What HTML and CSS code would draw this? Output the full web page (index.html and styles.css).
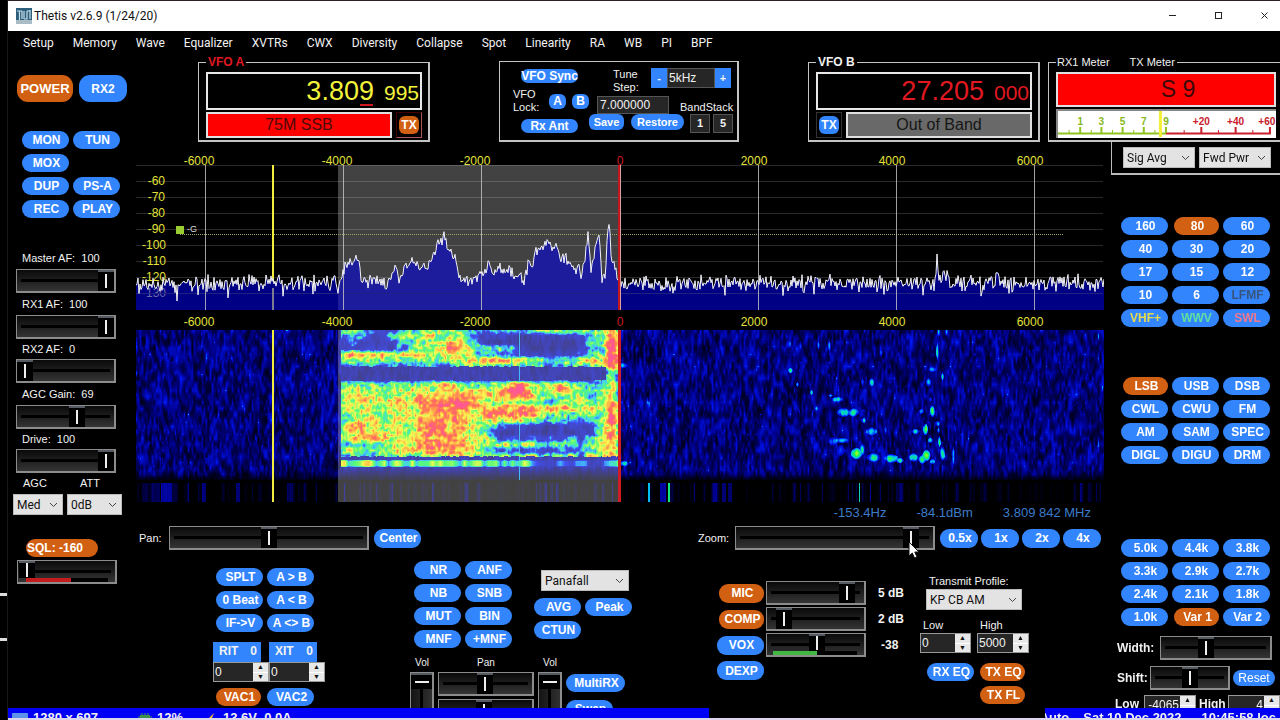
FILE: index.html
```html
<!DOCTYPE html>
<html lang="en">
<head>
<meta charset="utf-8">
<title>Thetis v2.6.9 (1/24/20)</title>
<link rel="stylesheet" href="styles.css">
</head>
<body>
<div class="desktop">
  <div class="gutter"></div>
  <div class="app">
    <header class="titlebar">
      <svg class="app-icon" width="16" height="16" viewBox="0 0 16 16"><rect width="16" height="16" fill="#2d5f7c"/><rect y="12" width="16" height="4" fill="#a9bcc6"/><path d="M1 3H6M3.500 3V12M6 3V11M8 3V11M8 11H11V3M14 2V11M11 3H14" fill="none" stroke="#c6dfea" stroke-width="1.200"/></svg>
      <h1>Thetis v2.6.9 (1/24/20)</h1>
      <div class="win-buttons">
        <button aria-label="Minimize"><svg width="10" height="10" viewBox="0 0 10 10"><path d="M1 4.500H8" stroke="#222"/></svg></button>
        <button aria-label="Maximize"><svg width="10" height="10" viewBox="0 0 10 10"><rect x="1.500" y="1.500" width="6" height="6" fill="none" stroke="#222"/></svg></button>
        <button aria-label="Close"><svg width="10" height="10" viewBox="0 0 10 10"><path d="M1.500 1.500L7.500 7.500M7.500 1.500L1.500 7.500" stroke="#222"/></svg></button>
      </div>
    </header>
    <nav class="menu">
      <button>Setup</button><button>Memory</button><button>Wave</button><button>Equalizer</button><button>XVTRs</button><button>CWX</button><button>Diversity</button><button>Collapse</button><button>Spot</button><button>Linearity</button><button>RA</button><button>WB</button><button>PI</button><button>BPF</button>
    </nav>

    <div class="top">
      <div class="power-row"><button class="pill big on">POWER</button><button class="pill big rx2">RX2</button></div>
      <div class="vfos">
        <fieldset class="group vfo">
          <legend class="red-text">VFO A</legend>
          <div class="freq yellow-text"><span>3.80<u>9</u></span><small>995</small></div>
          <div class="band-row"><div class="band-name red">75M SSB</div><button class="tx tx-on"><span>TX</span></button></div>
        </fieldset>
        <div class="group sync">
          <div class="sync-left">
            <button class="pill mini wide">VFO Sync</button>
            <div class="lock"><span>VFO<br>Lock:</span><button class="pill tiny">A</button><button class="pill tiny">B</button></div>
            <button class="pill mini wide">Rx Ant</button>
          </div>
          <div class="sync-right">
            <div class="tune"><label for="step">Tune<br>Step:</label><div class="stepper"><button>-</button><input id="step" value="5kHz"><button>+</button></div></div>
            <div class="stack"><input aria-label="Saved frequency" value="7.000000"><span>BandStack</span></div>
            <div class="stack-buttons"><button class="pill save">Save</button><button class="pill restore">Restore</button><button class="square">1</button><button class="square">5</button></div>
          </div>
        </div>
        <fieldset class="group vfo">
          <legend>VFO B</legend>
          <div class="freq red-text"><span>27.205</span><small>000</small></div>
          <div class="band-row"><button class="tx"><span>TX</span></button><div class="band-name gray">Out of Band</div></div>
        </fieldset>
      </div>
      <fieldset class="group meters">
        <legend class="plain"><span>RX1 Meter</span><span>TX Meter</span></legend>
        <div class="s-value">S 9</div>
        <div class="s-scale">
          <svg viewBox="0 0 216 26" preserveAspectRatio="none">
            <path d="M0 22.500H107" stroke="#8fc31f" stroke-width="2"/><path d="M107 22.500H211" stroke="#c8202c" stroke-width="2"/>
            <path d="M22 16V22M43 16V22M64 16V22M85 16V22M107 16V22" stroke="#8fc31f" stroke-width="2"/>
            <path d="M11 19V22M33 19V22M54 19V22M75 19V22M96 19V22" stroke="#8fc31f"/>
            <path d="M142 16V22M176 16V22M210 16V22" stroke="#c8202c" stroke-width="2"/><path d="M125 19V22M159 19V22M193 19V22" stroke="#c8202c"/>
            <path d="M101.500 0V26" stroke="#f3f03a" stroke-width="3"/>
            <g class="scale-text" fill="#86b822"><text x="22" y="14">1</text><text x="43" y="14">3</text><text x="64" y="14">5</text><text x="85" y="14">7</text><text x="107" y="14">9</text></g>
            <g class="scale-text" fill="#c8202c"><text x="142" y="14">+20</text><text x="176" y="14">+40</text><text x="207" y="14">+60</text></g>
          </svg>
        </div>
      </fieldset>
    </div>

    <main class="main">
      <aside class="left">
        <div class="pills two">
          <button class="pill">MON</button><button class="pill">TUN</button>
          <button class="pill">MOX</button><span></span>
          <button class="pill">DUP</button><button class="pill">PS-A</button>
          <button class="pill">REC</button><button class="pill">PLAY</button>
        </div>
        <div class="gains">
          <label for="maf">Master AF:&nbsp; 100</label><input type="range" id="maf" value="100">
          <label for="r1af">RX1 AF:&nbsp; 100</label><input type="range" id="r1af" value="100">
          <label for="r2af" class="tight">RX2 AF:&nbsp; 0</label><input type="range" id="r2af" value="0">
          <label for="agcg">AGC Gain:&nbsp; 69</label><input type="range" id="agcg" value="64">
          <label for="drive" class="tight">Drive:&nbsp; 100</label><input type="range" id="drive" value="100">
        </div>
        <div class="agc-row">
          <div><label for="agc">AGC</label><select id="agc"><option>Med</option></select></div>
          <div class="att"><label for="att">ATT</label><select id="att"><option>0dB</option></select></div>
        </div>
        <div class="squelch"><button class="pill on sql">SQL: -160</button><input type="range" class="level-red" aria-label="Squelch" value="1"></div>
      </aside>

      <section class="center">
        <svg class="pan" viewBox="136 153 968 177">
          <defs><clipPath id="band"><rect x="338" y="165" width="281" height="145"/></clipPath></defs>
          <rect x="338" y="165" width="281" height="145" fill="#424242"/>
          <path class="hgrid" d="M136 165.500H1103M136 181.500H1103M136 197.500H1103M136 213.500H1103M136 229.500H1103M136 245.500H1103M136 261.500H1103M136 277.500H1103"/>
          <g class="axis end"><text x="165" y="185">-60</text><text x="165" y="201">-70</text><text x="165" y="217">-80</text><text x="165" y="233">-90</text><text x="166" y="249">-100</text><text x="166" y="265">-110</text></g>
          <path d="M180 234.500H1064" stroke="#94a860" stroke-dasharray="1 1"/>
          <rect x="176" y="226" width="8" height="8" fill="#9acd32"/><text x="187" y="232" class="gain-mark">-G</text>
          <path d="M273 165V310" stroke="#f2ec3e" stroke-width="2"/>
          <path id="fill" fill="#000084"/><path id="fill-band" fill="#1c1c9c" clip-path="url(#band)"/>
          <text x="166" y="281" class="axis end">-120</text>
          <text x="166" y="297" class="axis-dim">-130</text>
          <path d="M136 293.500H1103" stroke="#202080" />
          <path d="M205.500 165V310M343.500 165V310M481.500 165V310M758.500 165V310M896.500 165V310M1034.500 165V310" stroke="#c8c8c8" stroke-opacity=".8"/>
          <path d="M273 288V310" stroke="#7c7c90" stroke-width="2"/>
          <path id="trace" fill="none" stroke="#f4f4f8"/>
          <path d="M619 165V310" stroke="#c4161c" stroke-width="2"/><path d="M620.500 165V310" stroke="#d8a0a0"/>
          <g class="axis"><text x="199" y="165">-6000</text><text x="337" y="165">-4000</text><text x="475" y="165">-2000</text><text x="620" y="165" class="zero">0</text><text x="754" y="165">2000</text><text x="892" y="165">4000</text><text x="1030" y="165">6000</text>
          <text x="199" y="326">-6000</text><text x="337" y="326">-4000</text><text x="475" y="326">-2000</text><text x="620" y="326" class="zero">0</text><text x="754" y="326">2000</text><text x="892" y="326">4000</text><text x="1030" y="326">6000</text></g>
        </svg>
        <canvas id="fall" width="968" height="172"></canvas>
        <div class="readout"><span>-153.4Hz</span><span>-84.1dBm</span><span>3.809 842 MHz</span></div>
        <div class="panzoom">
          <label for="pan">Pan:</label><input type="range" id="pan" class="long" value="50"><button class="pill">Center</button>
          <label for="zoom" class="push">Zoom:</label>
          <div class="zoomer"><input type="range" id="zoom" class="long" value="92"><svg class="cursor" width="12" height="19" viewBox="0 0 12 19"><path d="M1 1V15L4.300 12L6.500 17L9 16L6.800 11H11Z" fill="#fff" stroke="#111"/></svg></div>
          <div class="zoom-pills"><button class="pill">0.5x</button><button class="pill">1x</button><button class="pill">2x</button><button class="pill">4x</button></div>
        </div>
        <div class="controls">
          <div class="block-a">
            <div class="pills two">
              <button class="pill">SPLT</button><button class="pill">A &gt; B</button>
              <button class="pill">0 Beat</button><button class="pill">A &lt; B</button>
              <button class="pill">IF-&gt;V</button><button class="pill">A &lt;&gt; B</button>
            </div>
            <div class="offsets">
              <div><button class="offset"><span>RIT</span><span>0</span></button><div class="spin"><input aria-label="RIT" value="0"><span><button aria-label="RIT up">▲</button><button aria-label="RIT down">▼</button></span></div></div>
              <div><button class="offset"><span>XIT</span><span>0</span></button><div class="spin"><input aria-label="XIT" value="0"><span><button aria-label="XIT up">▲</button><button aria-label="XIT down">▼</button></span></div></div>
            </div>
            <div class="pills two"><button class="pill on start">VAC1</button><button class="pill">VAC2</button></div>
          </div>
          <div class="block-b">
            <div class="dsp">
              <div class="pills two">
                <button class="pill">NR</button><button class="pill">ANF</button>
                <button class="pill">NB</button><button class="pill">SNB</button>
                <button class="pill">MUT</button><button class="pill">BIN</button>
                <button class="pill">MNF</button><button class="pill">+MNF</button>
              </div>
              <div class="view">
                <select aria-label="Display mode"><option>Panafall</option></select>
                <div class="pills two"><button class="pill">AVG</button><button class="pill">Peak</button><button class="pill">CTUN</button></div>
              </div>
            </div>
            <div class="multi">
              <div class="vol"><label for="v1">Vol</label><input type="range" class="vert" id="v1" value="100"></div>
              <div class="vol pans"><label for="p1">Pan</label><input type="range" id="p1" value="49"><input type="range" aria-label="Sub pan" value="48"></div>
              <div class="vol"><label for="v2">Vol</label><input type="range" class="vert" id="v2" value="100"></div>
              <div class="multi-pills"><button class="pill wide">MultiRX</button><button class="pill">Swap</button></div>
            </div>
          </div>
          <div class="block-c">
            <div class="mic">
              <button class="pill on">MIC</button><input type="range" aria-label="Mic gain" value="89"><output>5 dB</output>
              <button class="pill on">COMP</button><input type="range" aria-label="Compression" value="11"><output>2 dB</output>
              <button class="pill">VOX</button><input type="range" class="level-green" aria-label="VOX level" value="52"><output class="num">-38</output>
              <button class="pill">DEXP</button>
            </div>
            <div class="profile">
              <label for="prof">Transmit Profile:</label><select id="prof"><option>KP CB AM</option></select>
              <div class="limits">
                <div><label for="lo">Low</label><div class="spin"><input id="lo" value="0"><span><button aria-label="Low up">▲</button><button aria-label="Low down">▼</button></span></div></div>
                <div><label for="hi">High</label><div class="spin"><input id="hi" value="5000"><span><button aria-label="High up">▲</button><button aria-label="High down">▼</button></span></div></div>
              </div>
              <div class="pills two eq"><button class="pill">RX EQ</button><button class="pill on">TX EQ</button><span></span><button class="pill on">TX FL</button></div>
            </div>
          </div>
        </div>
      </section>

      <aside class="right">
        <div class="meter-modes"><select aria-label="RX meter"><option>Sig Avg</option></select><select aria-label="TX meter"><option>Fwd Pwr</option></select></div>
        <div class="pills three bands">
          <button class="pill">160</button><button class="pill on">80</button><button class="pill">60</button>
          <button class="pill">40</button><button class="pill">30</button><button class="pill">20</button>
          <button class="pill">17</button><button class="pill">15</button><button class="pill">12</button>
          <button class="pill">10</button><button class="pill">6</button><button class="pill lfmf">LFMF</button>
          <button class="pill vhf">VHF+</button><button class="pill wwv">WWV</button><button class="pill swl">SWL</button>
        </div>
        <div class="pills three modes">
          <button class="pill on">LSB</button><button class="pill">USB</button><button class="pill">DSB</button>
          <button class="pill">CWL</button><button class="pill">CWU</button><button class="pill">FM</button>
          <button class="pill">AM</button><button class="pill">SAM</button><button class="pill">SPEC</button>
          <button class="pill">DIGL</button><button class="pill">DIGU</button><button class="pill">DRM</button>
        </div>
        <div class="pills three filters">
          <button class="pill">5.0k</button><button class="pill">4.4k</button><button class="pill">3.8k</button>
          <button class="pill">3.3k</button><button class="pill">2.9k</button><button class="pill">2.7k</button>
          <button class="pill">2.4k</button><button class="pill">2.1k</button><button class="pill">1.8k</button>
          <button class="pill">1.0k</button><button class="pill on">Var 1</button><button class="pill">Var 2</button>
        </div>
        <div class="side-row"><label for="wid">Width:</label><input type="range" id="wid" value="40"></div>
        <div class="side-row"><label for="shf">Shift:</label><input type="range" id="shf" value="50"><button class="pill reset">Reset</button></div>
        <div class="edges"><label for="flo">Low</label><div class="spin"><input id="flo" value="-4065"><span><button aria-label="Filter low up">▲</button><button aria-label="Filter low down">▼</button></span></div><label for="fhi">High</label><div class="spin"><input id="fhi" value="4"><span><button aria-label="Filter high up">▲</button><button aria-label="Filter high down">▼</button></span></div></div>
      </aside>
    </main>

    <footer class="status">
      <div class="status-left">
        <svg width="16" height="14" viewBox="0 0 16 14"><rect width="16" height="11" rx="1" fill="#5f93ea"/></svg><span class="res">1280 x 697</span>
        <svg width="14" height="14" viewBox="0 0 14 14"><path d="M4 0V14M7 0V14M10 0V14M0 4H14M0 7H14M0 10H14" stroke="#4d9a58"/><rect x="2" y="2" width="10" height="10" fill="#3f8f4b"/><rect x="5" y="5" width="4" height="4" fill="#245c2e"/></svg><span class="cpu">12%</span>
        <svg width="12" height="14" viewBox="0 0 12 14"><path d="M8 0L0 8H5L3 14L11 5H6Z" fill="#f2c12e"/></svg><span>13.6V&nbsp; 0.0A</span>
      </div>
      <div class="status-right"><span>Auto</span><span>Sat 10 Dec 2022</span><span class="clock">10:45:58 loc</span></div>
    </footer>
  </div>
</div>
<script src="scope.js"></script>
</body>
</html>
```
FILE: styles.css
```css
* { box-sizing: border-box; }
body { margin: 0; background: #000; color: #f2f2f2; font: 11px/13px "Liberation Sans", Arial, sans-serif; overflow: hidden; }
button, input, select { font: inherit; color: inherit; margin: 0; }
button { border: 0; padding: 0; cursor: pointer; }
.desktop { display: flex; height: 100vh; }
.gutter { flex: none; width: 8px; border-right: 1px solid #181818; background: linear-gradient(#ddd, #ddd) 0 593px / 8px 3px no-repeat, linear-gradient(#ddd, #ddd) 0 638px / 8px 3px no-repeat; }
.app { flex: 1; min-width: 0; display: flex; flex-direction: column; border-top: 1px solid #2a2226; border-bottom: 2px solid #ddd6ee; }

.titlebar { flex: none; height: 30px; background: #fff; color: #111; display: flex; align-items: center; padding: 0 8px; gap: 2px; }
.titlebar h1 { margin: 0; font: 12px/16px Roboto, "Noto Sans", sans-serif; }
.win-buttons { margin-left: auto; display: flex; gap: 35px; padding-right: 2px; }
.win-buttons button { background: none; width: 11px; height: 11px; display: flex; align-items: center; justify-content: center; }
.menu { flex: none; height: 24px; display: flex; align-items: center; gap: 19px; padding-left: 15px; }
.menu button { background: none; font: 12px/16px Roboto, "Noto Sans", sans-serif; }

.pill { width: 47px; height: 18px; flex: none; border-radius: 9px; background: #3385fd; color: #fff; font: bold 12px/18px "Liberation Sans", Arial, sans-serif; padding-left: 2px; white-space: nowrap; }
.pill.on { background: #d26012; width: 45px; justify-self: end; }
.pill.on.start { justify-self: start; }
.pill.big { width: 48px; height: 27px; border-radius: 11px; padding: 0; }
.pill.big.on { width: 56px; font-size: 13px; }
.pills { display: grid; gap: 5px 4px; }
.two { grid-template-columns: 47px 47px; }
.three { grid-template-columns: 47px 47px 47px; }

.top { flex: none; display: flex; align-items: flex-start; height: 76px; }
.power-row { flex: none; width: 190px; display: flex; gap: 6px; padding: 20px 0 0 9px; }
.vfos { flex: 1; display: flex; justify-content: space-between; }
.group { border: 2px solid #c4c4c4; border-width: 1px 2px 2px 1px; margin: 6px 0 0; height: 81px; min-width: 0; }
.vfo { width: 232px; padding: 3px 6px 0 7px; margin-top: 0; height: 87px; }
.group legend { font: bold 12px/14px "Liberation Sans", Arial, sans-serif; padding: 0 2px; margin-left: 0; }
.group .plain { font-weight: normal; font-size: 11px; padding: 0 2px 0 1px; display: flex; gap: 20px; }
.red-text { color: #e01820; }
.yellow-text { color: #f3f33c; }
.freq { height: 38px; width: 216px; border: 2px solid #e8e8e8; display: flex; justify-content: flex-end; align-items: baseline; gap: 10px; font-size: 27px; line-height: 35px; padding-right: 1px; }
.freq small { font-size: 21px; }
.freq u { text-decoration: none; background: linear-gradient(#d01820, #d01820) 50% 100% / 13px 2px no-repeat; }
.band-row { display: flex; gap: 4px; margin-top: 2px; justify-content: space-between; }
.band-name { flex: 1; height: 26px; border: 2px solid #e0e0e0; text-align: center; font-size: 16px; line-height: 21px; }
.band-name.red { background: #f00; color: #4a0a0a; }
.band-name.gray { background: #696969; color: #161616; }
.tx { width: 26px; height: 26px; background: #000; border: 1px solid #333; font: bold 12px/18px "Liberation Sans", Arial, sans-serif; display: flex; align-items: center; justify-content: center; }
.tx span { width: 20px; height: 18px; border-radius: 6px; background: #3385fd; color: #fff; }
.tx-on { border-color: #400 #a55 #a55 #400; }
.tx-on span { background: #d26012; }

.sync { width: 240px; display: flex; padding: 7px 0 0 13px; }
.sync-left { width: 76px; display: flex; flex-direction: column; }
.pill.mini { height: 14px; line-height: 14px; margin-left: 8px; }
.pill.mini.wide { width: 57px; padding: 0; }
.lock { display: flex; gap: 6px; align-items: center; margin: 5px 0 5px; height: 26px; }
.lock span { width: 30px; }
.pill.tiny { width: 17px; height: 15px; border-radius: 6px; line-height: 15px; padding: 0; }
.sync-right { flex: 1; display: flex; flex-direction: column; margin-top: -1px; }
.tune { display: flex; padding-left: 24px; height: 26px; }
.tune label { width: 38px; }
.stepper { display: flex; height: 20px; }
.stepper button { width: 16px; background: #3385fd; font-weight: bold; }
.stepper input { width: 48px; background: #262626; border: 1px solid #555; padding: 0 1px; }
.stepper input, .stack input { font-size: 12px; }
.stack { display: flex; gap: 11px; padding-left: 8px; align-items: flex-end; height: 20px; }
.stack input { width: 72px; height: 18px; background: #262626; border: 1px solid #555; padding: 0 2px; }
.stack-buttons { display: flex; }
.pill.save, .pill.restore { height: 16px; line-height: 16px; font-size: 11px; padding: 0; border-radius: 6px; width: 35px; margin-right: 7px; }
.pill.restore { width: 53px; border-radius: 8px; margin-right: 6px; }
.square { width: 20px; height: 19px; background: #262626; border: 1px solid #555; font-weight: bold; margin: 0 3px 0 0; }

.meters { width: 232px; flex: none; margin: 0 0 0 8px; height: 87px; border-right: 0; padding: 3px 4px 0 7px; }
.s-value { height: 35px; background: #f00; border: 2px solid #e0e0e0; color: #3c0808; font-size: 23px; line-height: 31px; text-align: center; padding-left: 24px; }
.s-scale { margin-top: 2px; height: 29px; background: #fff; border-top: 2px solid #888; border-left: 2px solid #888; }
.s-scale svg { display: block; width: 100%; height: 26px; }
.scale-text { font: bold 10px "Liberation Sans", Arial, sans-serif; text-anchor: middle; }

.main { flex: 1; min-height: 0; overflow: hidden; display: flex; align-items: flex-start; }
.left { flex: none; width: 128px; }
.left > .two { margin-left: 14px; }
.gains { display: flex; flex-direction: column; width: 100px; margin: 29px 0 0 8px; }
.gains label { line-height: 22px; padding-left: 6px; white-space: nowrap; }
.gains label.tight { line-height: 20px; }

input[type="range"] { appearance: none; width: 100px; height: 24px; border: 1px solid #8c8c8c; border-width: 1px 2px 2px 1px; background: linear-gradient(#000, #000) 50% 50% / calc(100% - 8px) 3px no-repeat, linear-gradient(#0a0a0a, #343434); flex: none; }
input[type="range"]::-webkit-slider-thumb { appearance: none; width: 16px; height: 21px; background: linear-gradient(#eee, #eee) 50% 40% / 2px 14px no-repeat, #000; border-top: 2px solid #555a62; }
input.level-red { background: linear-gradient(#c41c1c, #c41c1c) 8px 100% / 45px 4px no-repeat, linear-gradient(#000, #000) 8px 100% / 82px 4px no-repeat, linear-gradient(#000, #000) 50% 50% / calc(100% - 8px) 3px no-repeat, linear-gradient(#0a0a0a, #343434); }
input.level-green { background: linear-gradient(#42b842, #42b842) 6px 100% / 44px 4px no-repeat, linear-gradient(#000, #000) 8px 100% / 82px 4px no-repeat, linear-gradient(#000, #000) 50% 50% / calc(100% - 8px) 3px no-repeat, linear-gradient(#0a0a0a, #343434); }
input.level-red::-webkit-slider-thumb, input.level-green::-webkit-slider-thumb { height: 17px; margin-top: -4px; }
input[type="range"].vert { writing-mode: vertical-lr; direction: rtl; width: 24px; height: 90px; background: linear-gradient(#000, #000) 50% 50% / 3px calc(100% - 8px) no-repeat, linear-gradient(90deg, #141414, #303030); }
input[type="range"].vert::-webkit-slider-thumb { width: 21px; height: 16px; background: linear-gradient(#eee, #eee) 50% 50% / 14px 2px no-repeat, #000; }

select { appearance: none; height: 21px; border: 1px solid #bbb; border-radius: 0; padding: 0 3px; color: #111; font: 12px/18px Roboto, "Noto Sans", sans-serif; background: #e3e3e3 url("data:image/svg+xml,%3Csvg xmlns='http://www.w3.org/2000/svg' width='9' height='6'%3E%3Cpath d='M1 1L4.500 4.500L8 1' fill='none' stroke='%23444'/%3E%3C/svg%3E") right 4px center no-repeat; }
.agc-row { display: flex; gap: 4px; padding-left: 5px; }
.agc-row div { display: flex; flex-direction: column; width: 50px; }
.agc-row .att { width: 55px; }
.agc-row label { line-height: 21px; padding-left: 10px; }
.agc-row .att label { padding-left: 13px; }
.squelch { display: flex; flex-direction: column; margin: 24px 0 0 9px; gap: 3px; }
.pill.sql { width: 72px; margin-left: 9px; text-align: left; padding-left: 1px; }

.center { flex: 1; min-width: 0; margin-top: 22px; }
.pan, #fall { display: block; width: 100%; height: auto; }
.hgrid { stroke: #fff; stroke-opacity: .16; }
.axis, .axis-dim { font: 12px "Liberation Sans", Arial, sans-serif; fill: #e2e23a; text-anchor: middle; }
.end, .axis-dim { text-anchor: end; }
.axis-dim { fill: #6a6aa8; }
.zero { fill: #d01820; }
.gain-mark { font: 9px "Liberation Sans", Arial, sans-serif; fill: #ddd; }
.readout { display: flex; justify-content: flex-end; gap: 30px; padding: 3px 13px 0 0; color: #3d7cc9; font-size: 13px; line-height: 15px; }
.panzoom { display: flex; align-items: center; margin-top: 6px; padding: 0 3px; }
.panzoom label { width: 30px; }
.panzoom .push { margin-left: auto; width: 37px; }
.panzoom > .pill { margin-left: 5px; height: 19px; }
input[type="range"].long { width: 200px; }
.zoomer { position: relative; display: flex; }
.cursor { position: absolute; left: 173px; top: 15px; }
.zoom-pills { display: flex; gap: 3px; margin-left: 5px; }
.zoom-pills .pill { width: 38px; height: 19px; }
.controls { display: flex; justify-content: space-between; align-items: flex-start; padding: 11px 75px 0 77px; }
.block-a { width: 112px; padding: 7px 0 0 3px; }
.offsets { display: grid; grid-template-columns: 56px 56px; margin: 10px 0 6px -3px; }
.offset { width: 48px; height: 20px; background: #3385fd; font: bold 12px/18px "Liberation Sans", Arial, sans-serif; display: flex; justify-content: space-between; padding: 0 4px 0 6px; }
.spin { display: flex; height: 20px; border: 1px solid #999; background: #262626; }
.spin input { flex: 1; width: 0; border: 0; background: none; padding: 0 1px; font-size: 12px; }
.spin > span { width: 15px; display: flex; flex-direction: column; gap: 1px; background: #fff; }
.spin button { flex: 1; background: #e8e8e8; color: #111; font-size: 7px; line-height: 8px; height: 8px; }
.block-b { width: 222px; }
.dsp { display: flex; justify-content: space-between; padding-left: 4px; }
.view { padding-top: 9px; }
.view select { width: 88px; margin: 0 0 7px 7px; display: block; }
.multi { display: flex; gap: 4px; margin-top: 9px; }
.vol { display: flex; flex-direction: column; gap: 3px; font-size: 10px; width: 24px; }
.vol label { text-align: center; line-height: 12px; }
.pans { width: 96px; }
.pans input[type="range"] { width: 96px; }
.multi-pills { display: flex; flex-direction: column; gap: 8px; padding-top: 17px; }
.pill.wide { width: 59px; }
.block-c { width: 312px; display: flex; justify-content: space-between; align-items: flex-start; }
.mic { display: grid; grid-template-columns: 47px 100px auto; gap: 2px; align-items: center; margin-top: 20px; }
.mic .pill { height: 19px; margin: 2px 0; }
.mic output { font: bold 12px/18px "Liberation Sans", Arial, sans-serif; padding-left: 10px; }
.mic .num { padding-left: 13px; }
.profile { width: 109px; padding-top: 13px; display: flex; flex-direction: column; }
.profile > label { padding-left: 9px; line-height: 15px; }
.profile > select { width: 96px; margin-left: 6px; }
.limits { display: grid; grid-template-columns: 51px 52px; gap: 6px; margin-top: 8px; }
.limits label { line-height: 15px; padding-left: 3px; }
.eq { margin: 10px 0 0 7px; }

.right { flex: none; width: 176px; padding-left: 7px; margin-top: 11px; }
.meter-modes { height: 33px; border-left: 1px solid #bbb; border-bottom: 2px solid #bbb; display: flex; gap: 4px; padding: 5px 0 0 11px; }
.meter-modes select { width: 72px; }
.bands { margin: 42px 0 0 10px; }
.modes { margin: 50px 0 0 10px; }
.filters { margin: 75px 0 0 10px; }
.lfmf { color: #38557e; }
.vhf { color: #e6da50; }
.wwv { color: #5fe0a0; }
.swl { color: #f0788c; }
.side-row { display: flex; align-items: center; margin-top: 6px; padding-left: 6px; gap: 3px; }
.side-row label, .edges label { font-weight: bold; font-size: 12px; }
.side-row label { width: 40px; }
.filters + .side-row { margin-top: 10px; }
#wid { width: 112px; }
#shf { width: 80px; margin-left: -10px; }
.pill.reset { width: 42px; height: 16px; line-height: 16px; font-weight: normal; padding: 0; }
.edges { display: flex; gap: 3px; padding-left: 4px; margin-top: 5px; line-height: 18px; }
.edges .spin { width: 52px; }
.edges .spin input { text-align: right; }
.edges label { width: 26px; }

.status { flex: none; height: 10px; display: flex; justify-content: space-between; overflow: hidden; font: bold 13px/16px "Liberation Sans", Arial, sans-serif; }
.status-left, .status-right { background: #0000f4; height: 20px; padding-top: 2px; display: flex; }
.status-left { width: 701px; padding-left: 4px; gap: 5px; }
.status-left svg { margin-top: 3px; flex: none; }
.res { width: 100px; }
.cpu { width: 44px; }
.status-right { width: 235px; gap: 14px; overflow: hidden; justify-content: flex-end; padding-right: 4px; white-space: nowrap; }
.clock { padding-left: 6px; }
```
FILE: scope.js
```js
(function () {
  let seed = 7;
  function rnd() {
    seed = (seed * 1664525 + 1013904223) >>> 0;
    return seed / 4294967296;
  }

  // Spectrum: peaks inside and outside the receive filter, over a noise floor.
  const keys = [[136,284],[338,282],[341,280],[344,268],[349,263],[353,264],[357,259],[359,266],[362,283],[366,284],[370,279],[384,281],[386,290],[389,280],[396,269],[400,281],[405,265],[416,263],[420,267],[428,263],[432,256],[436,248],[440,239],[444,238],[447,248],[451,253],[456,262],[459,276],[464,280],[472,282],[478,275],[486,273],[489,265],[494,277],[499,266],[504,274],[509,267],[514,278],[520,272],[524,284],[528,264],[533,264],[536,252],[539,246],[545,247],[548,242],[552,247],[557,246],[560,261],[566,258],[570,263],[576,274],[579,266],[581,281],[585,256],[588,234],[591,269],[595,250],[599,234],[602,281],[605,280],[608,226],[609,224],[611,254],[615,268],[620,283],[934,283],[937,262],[939,282],[946,270],[950,283],[980,283],[982,296],[985,283],[995,283],[997,270],[1000,284],[1104,283]];
  let k = 0, line = "";
  for (let x = 136; x <= 1104; x += 1) {
    while (k < keys.length - 2 && keys[k + 1][0] < x) k++;
    const a = keys[k], b = keys[k + 1];
    const base = a[1] + (b[1] - a[1]) * (x - a[0]) / (b[0] - a[0]);
    const inBand = x > 340 && x < 618;
    let n = (rnd() + rnd() - 1) * (inBand ? 7 : 10);
    if (!inBand && rnd() < 0.05) n += 8;
    line += (line ? "L" : "M") + x + " " + (base + n).toFixed(1);
  }
  const area = line + "L1104 310L136 310Z";
  document.getElementById("trace").setAttribute("d", line);
  document.getElementById("fill").setAttribute("d", area);
  document.getElementById("fill-band").setAttribute("d", area);

  // Waterfall: signal strength inside the filter, one row per 6 lines, one digit per 10 columns.
  const rows = [
    "45421134455653233324555544585",
    "34311345575652111100111113485",
    "12111134556763100000000013496",
    "11111124567875444310000013496",
    "68777667656765332211111124496",
    "56555555555666677775545567696",
    "13231313231345453533323345484",
    "00000000000000000000000000143",
    "00000000000000000000000000251",
    "45554455567755555785557543363",
    "56654566667766667996568653462",
    "56666666777777677888544653472",
    "56766666888998655555535654583",
    "56665666788886678788777767584",
    "55655567777876688888655455384",
    "56676666778886565764334334695",
    "57766666788776542111001111582",
    "56776666798776520010001011582",
    "67777666777776641212121314683",
    "34444566888786646556454425673",
    "56545667787877531212113134673",
    "34435454565765545557354627684",
    "56564545555555443454312221157",
    "22212121222111111121101111012",
    "00000000000000000000000000000",
    "00000000000000000000000000000"];
  const level = [0.13, 0.2, 0.32, 0.42, 0.49, 0.56, 0.65, 0.75, 0.87, 1];
  const stops = [[0,0,0,0],[.14,0,0,135],[.3,0,20,245],[.42,0,190,245],[.54,30,250,70],[.66,245,250,20],[.78,255,150,10],[.88,255,60,30],[1,255,30,110]];
  function colour(v) {
    v = Math.max(0, Math.min(1, v));
    let i = 1;
    while (stops[i][0] < v) i++;
    const a = stops[i - 1], b = stops[i], t = (v - a[0]) / (b[0] - a[0]);
    return [1, 2, 3].map(function (c) { return a[c] + (b[c] - a[c]) * t; });
  }
  const table = new Float32Array(65536);
  for (let i = 0; i < 65536; i++) table[i] = rnd();
  function noise(x, y) {
    const xi = Math.floor(x), yi = Math.floor(y), u = x - xi, w = y - yi;
    const at = function (p, q) { return table[((q * 757) + p * 13 + ((p * q) % 97) * 31 + 4096) & 65535]; };
    return (at(xi, yi) * (1 - u) + at(xi + 1, yi) * u) * (1 - w) + (at(xi, yi + 1) * (1 - u) + at(xi + 1, yi + 1) * u) * w;
  }
  function ease(t) { return t * t * (3 - 2 * t); }
  // Weak signals above the carrier: x, y, half width, half height, level.
  const spots = [[788,344,2,3,.38],[800,345,1,3,.35],[818,345,1,3,.36],[829,346,1,4,.4],[790,370,2,2,.45],[797,384,1,2,.42],[811,392,1,2,.42],[816,408,1,2,.38],[830,395,2,1,.38],[837,399,4,2,.46],[843,412,5,3,.46],[853,412,4,3,.47],[862,382,1,3,.4],[871,382,2,3,.47],[832,441,3,3,.42],[841,440,5,2,.44],[840,450,3,4,.4],[856,453,4,4,.6],[862,449,2,4,.45],[873,457,5,3,.5],[891,458,5,3,.55],[899,460,3,2,.47],[913,457,3,3,.5],[922,459,3,3,.48],[926,455,3,4,.6],[932,461,2,2,.45],[942,453,2,5,.48],[953,455,1,6,.44],[938,332,1,4,.42],[946,332,1,3,.35],[937,351,1,6,.45],[928,382,2,3,.47],[932,369,3,2,.38],[942,376,1,3,.46],[930,399,1,2,.42],[932,411,2,4,.54],[921,411,2,2,.38],[937,423,2,2,.42],[925,429,2,4,.56],[915,431,3,2,.44],[938,430,1,2,.4],[939,441,1,4,.52],[930,440,2,2,.42],[863,420,2,2,.44],[871,431,4,3,.49],[885,430,1,3,.37],[881,352,1,3,.33],[622,365,4,2,.38],[622,463,5,2,.42]];
  const cv = document.getElementById("fall"), ctx = cv.getContext("2d");
  const img = ctx.createImageData(968, 172);
  const streak = [];
  for (let x = 0; x < 968; x++) streak[x] = Math.pow(noise(x / 2 + 40, 3), 4) * noise(x / 25, 9) * 0.2;
  [[155,160,.1],[161,172,.19],[202,206,.13],[236,240,.13],[660,666,.19],[713,717,.16],[722,726,.13],[728,732,.13],[287,293,.1]].forEach(function (s) {
    for (let x = s[0]; x < s[1]; x++) streak[x - 136] = s[2] * (.8 + .3 * table[x]);
  });
  [[648,.42],[649,.42],[668,.5],[669,.5],[859,.46]].forEach(function (s) { streak[s[0] - 136] = s[1]; });
  for (let y = 0; y < 172; y++) {
    for (let x = 0; x < 968; x++) {
      const X = x + 136, Y = y + 330;
      let v;
      if (y >= 153) {
        v = streak[x];
      } else if (y > 149) {
        v = 0;
      } else {
        const n = noise(x / 2, y / 6), m = noise(x / 5 + 90, y / 9 + 30), s = noise(x / 1.3 + 200, y / 4 + 60);
        v = 0.02 + n * n * 0.2 + m * m * 0.11 + s * s * 0.06 + (s > .86 ? (s - .86) * 1.1 : 0);
        if (Y > 470) v *= (481 - Y) / 11;
        if (X >= 341 && X < 619 && Y < 478) {
          const gx = (X - 341) / 10, gy = y / 6;
          const cx = Math.min(27, Math.floor(gx)), cy = Math.min(24, Math.floor(gy));
          const u = ease(Math.min(1, gx - cx));
          let w = ease(gy - cy), q = cy;
          if (Y >= 460 && Y <= 466) { q = 22; w = 0; }
          const L = function (p, r) { return level[+rows[r][p]]; };
          let g = (L(cx, q) * (1 - u) + L(cx + 1, q) * u) * (1 - w) + (L(cx, q + 1) * (1 - u) + L(cx + 1, q + 1) * u) * w;
          const edge = noise(x / 3, 50) * 2;
          if ((Y > 455 + edge && Y < 460) || Y > 466) g = .16;
          if (Y > 365 + edge && Y < 381 - edge && X < 606) g = .15;
          if (g > .25) {
            v = g + (noise(x / 3 + 11, y / 2.5 + 5) - .5) * .34 + (noise(x / 1.5 + 300, y / 5 + 80) - .5) * .18;
            if (Y >= 460) v = g + (noise(x / 4 + 60, 20) - .6) * .35;
            if (Y === 460 || Y === 466) v -= .12;
            if (v < .18) v = .18;
          } else {
            v = g * .7 + n * .1;
            if (Y > 466) v *= Math.max(0, (480 - Y) / 13);
          }
        }
        if (X === 519) v = Math.max(v, .4);
        for (const p of spots) {
          const dx = (X - p[0]) / p[2], dy = (Y - p[1]) / p[3], d = dx * dx + dy * dy;
          if (d < 2) v = Math.max(v, p[4] * (1 - d * .25) + (n - .5) * .22);
        }
      }
      const c = colour(v), inBand = X >= 338 && X < 619;
      const o = (y * 968 + x) * 4;
      for (let i = 0; i < 3; i++) img.data[o + i] = inBand ? c[i] + 66 * (1 - c[i] / 255) : c[i];
      img.data[o + 3] = 255;
    }
  }
  ctx.putImageData(img, 0, 0);
  ctx.fillStyle = "#f2ec3e";
  ctx.fillRect(136, 0, 2, 172);
  ctx.fillStyle = "#d01c24";
  ctx.fillRect(482, 0, 3, 172);
})();
```
